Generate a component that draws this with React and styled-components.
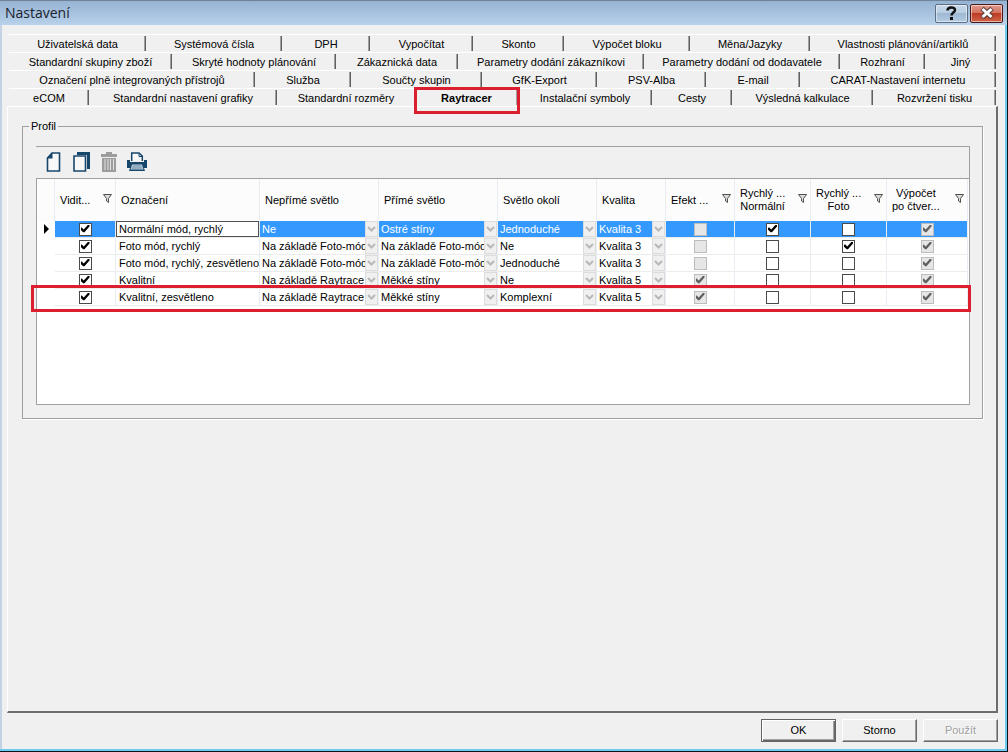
import React from 'react'
import styled, { createGlobalStyle, css } from 'styled-components'

const GlobalStyle = createGlobalStyle`
    * {
        box-sizing: border-box;
    }
    body {
        margin: 0;
        background: #f0f0f0;
        font-family: 'Liberation Sans', Arial, sans-serif;
        font-size: 11px;
        line-height: 14px;
        color: #000000;
    }
    button,
    input,
    select {
        font: inherit;
        color: inherit;
    }
`

const Window = styled.div`
    min-height: 100vh;
    display: flex;
    flex-direction: column;
    background: #f0f0f0;
    border-right: 1px solid #101418;
    border-bottom: 1px solid #101418;
    box-shadow: inset -2px -2px 0 #6ccdf0, inset 2px 0 0 #c3d3e5;
`

const TitleBar = styled.header`
    display: flex;
    align-items: center;
    height: 25px;
    padding: 0 4px 0 5px;
    border-top: 1px solid #6f8298;
    background: linear-gradient(#95b3d3, #b9d1ea);
`

const Title = styled.h1`
    flex: 1;
    margin: 0;
    font-family: 'Open Sans', 'Noto Sans', sans-serif;
    font-size: 14px;
    line-height: 20px;
    font-weight: 400;
    color: #1a222c;
`

const CaptionButton = styled.button`
    display: flex;
    align-items: center;
    justify-content: center;
    width: 33px;
    height: 19px;
    margin-left: 2px;
    padding: 0;
    border: 1px solid ${(p) => (p.$close ? '#4b1a18' : '#5c6f85')};
    border-radius: 2px;
    box-shadow: inset 0 0 0 1px rgba(255, 255, 255, 0.5);
    background: ${(p) =>
        p.$close
            ? 'linear-gradient(#e09a8c 0%, #d4705c 48%, #bd3a22 50%, #d0654a 100%)'
            : 'linear-gradient(#c8d9ea 0%, #b8cde2 48%, #9fb9d3 50%, #b4cbe2 100%)'};
`

const TabStrip = styled.nav`
    padding: 9px 11px 0 9px;
`

const TabRow = styled.div`
    display: flex;
    height: 18px;
`

const Tab = styled.button`
    position: relative;
    flex: ${(p) => p.$size} 0 0;
    min-width: 0;
    padding: 0;
    border: 0;
    border-top: 1px solid #ffffff;
    background: none;
    line-height: 16px;
    white-space: nowrap;
    font-weight: ${(p) => (p.$active ? 700 : 400)};

    &::after {
        content: '';
        display: ${(p) => (p.$noEdge ? 'none' : 'block')};
        position: absolute;
        right: 0;
        top: 1px;
        bottom: 1px;
        width: 2px;
        background: linear-gradient(90deg, #a0a0a0 50%, #606060 50%);
    }
`

/* red frame drawn over the highlighted tab or row */
const Marker = styled.span`
    position: absolute;
    z-index: 1;
    inset: ${(p) => p.$inset};
    border: 3px solid #dc1f2e;
    pointer-events: none;
`

const Panel = styled.main`
    flex: 1;
    margin: 0 9px 0 7px;
    padding: 12px 13px 0 14px;
    border: 1px solid #ffffff;
    border-right: 2px solid #6d6d6d;
    border-bottom: 2px solid #6d6d6d;
`

const Group = styled.fieldset`
    min-width: 0;
    margin: 0;
    padding: 13px 12px 13px 13px;
    border: 1px solid #a0a0a0;
    box-shadow: 1px 1px 0 #ffffff;
`

const Legend = styled.legend`
    margin-left: -7px;
    padding: 0 2px;
`

const Toolbar = styled.div`
    display: flex;
    align-items: center;
    gap: 6px;
    height: 32px;
    padding: 0 6px 2px;
    border-top: 1px solid #a0a0a0;
    border-right: 1px solid #a0a0a0;
`

const ToolButton = styled.button`
    display: flex;
    align-items: center;
    justify-content: center;
    width: 22px;
    height: 24px;
    padding: 0;
    border: 0;
    background: none;
`

const GridBox = styled.div`
    height: 227px;
    padding-right: 1px;
    border: 1px solid #a0a0a0;
    background: #ffffff;
`

const Grid = styled.table`
    width: 100%;
    table-layout: fixed;
    border-collapse: separate;
    border-spacing: 0;
`

const HeadCell = styled.th`
    height: 42px;
    padding: 0 3px 0 5px;
    border-right: 1px solid #e8edf3;
    background: #fcfcfc;
    font-weight: 400;
    text-align: left;
    line-height: 13px;
`

const HeadInner = styled.div`
    display: flex;
    align-items: center;
    justify-content: space-between;
    white-space: pre;
    text-align: ${(p) => (p.$center ? 'center' : 'left')};

    svg {
        margin-bottom: 4px;
    }
`

const Row = styled.tr`
    position: relative;
    ${(p) =>
        p.$selected &&
        css`
            td:not(:first-child) {
                background: #3399ff;
                color: #ffffff;
            }
        `}
`

const Cell = styled.td`
    height: 17px;
    padding: 0 0 0 3px;
    border-right: 1px solid #e8edf3;
    border-bottom: 1px solid #ececec;
    line-height: 16px;
    white-space: nowrap;

    &:first-child {
        padding: 0;
        border-color: transparent;
    }
`

const CheckCell = styled(Cell)`
    padding: 0;
`

const ComboCell = styled(Cell)`
    padding: 0 0 0 2px;
`

const NameInput = styled.input`
    display: block;
    width: 100%;
    height: 16px;
    padding: 0 2px;
    border: 1px solid #505050;
    outline: 0;
    background: #ffffff;
    color: #000000;
`

const NameCell = styled(Cell)`
    padding: ${(p) => (p.$editing ? 0 : '0 0 0 3px')};
`

const Pointer = styled.svg`
    display: block;
    margin-left: 7px;
`

const Combo = styled.div`
    display: flex;
    height: 16px;
`

const Select = styled.select`
    appearance: none;
    flex: 1;
    min-width: 0;
    height: 16px;
    padding: 0;
    border: 0;
    background: none;
    line-height: 16px;
    text-overflow: clip;
    opacity: 1;
`

const Arrow = styled.span`
    display: flex;
    align-items: center;
    justify-content: center;
    width: 13px;
    height: 16px;
    border: 1px solid #dcdcdc;
    background: #f0f0f0;
`

const Check = styled.input`
    appearance: none;
    display: block;
    width: 13px;
    height: 13px;
    margin: 0 auto;
    border: 1px solid #4a4a4a;
    background: #ffffff;
    color: #000000;

    &:disabled {
        border-color: #bcbcbc;
        background: #e6e6e6;
        color: #606060;
    }

    &:checked::after {
        content: '';
        display: block;
        width: 9px;
        height: 8px;
        margin: 1px;
        background: currentColor;
        clip-path: polygon(0 42%, 14% 38%, 36% 64%, 84% 2%, 100% 2%, 100% 24%, 44% 98%, 30% 98%, 0 66%);
    }
`

const Footer = styled.footer`
    display: flex;
    justify-content: flex-end;
    gap: 6px;
    padding: 6px 9px 9px;
`

const DialogButton = styled.button`
    width: 75px;
    height: 23px;
    padding: 0 0 2px;
    border: 1px solid;
    border-color: #ffffff #696969 #696969 #ffffff;
    background: #f0f0f0;
    box-shadow: inset -1px -1px 0 #a0a0a0;

    &:disabled {
        color: #a0a0a0;
        text-shadow: 1px 1px 0 #ffffff;
    }

    ${(p) =>
        p.$default &&
        css`
            border-color: #646464;
            box-shadow: inset 1px 1px 0 #ffffff, inset -1px -1px 0 #696969,
                inset -2px -2px 0 #a0a0a0;
        `}
`

const tabRows = [
    [
        ['Uživatelská data', 137],
        ['Systémová čísla', 136],
        ['DPH', 88],
        ['Vypočítat', 103],
        ['Skonto', 91],
        ['Výpočet bloku', 126],
        ['Měna/Jazyky', 120],
        ['Vlastnosti plánování/artiklů', 186],
    ],
    [
        ['Standardní skupiny zboží', 163],
        ['Skryté hodnoty plánování', 164],
        ['Zákaznická data', 122],
        ['Parametry dodání zákazníkovi', 186],
        ['Parametry dodání od dodavatele', 196],
        ['Rozhraní', 85],
        ['Jiný', 71],
    ],
    [
        ['Označení plně integrovaných přístrojů', 246],
        ['Služba', 96],
        ['Součty skupin', 131],
        ['GfK-Export', 115],
        ['PSV-Alba', 109],
        ['E-mail', 94],
        ['CARAT-Nastavení internetu', 196],
    ],
    [
        ['eCOM', 80],
        ['Standardní nastavení grafiky', 188],
        ['Standardní rozměry', 138],
        ['Raytracer', 103],
        ['Instalační symboly', 134],
        ['Cesty', 80],
        ['Výsledná kalkulace', 141],
        ['Rozvržení tisku', 123],
    ],
]

const columns = [
    { title: '', width: 18 },
    { title: 'Vidit...', width: 61, filter: true },
    { title: 'Označení', width: 144 },
    { title: 'Nepřímé světlo', width: 119 },
    { title: 'Přímé světlo', width: 119 },
    { title: 'Světlo okolí', width: 99 },
    { title: 'Kvalita', width: 69 },
    { title: 'Efekt ...', width: 69, filter: true },
    { title: 'Rychlý ...\nNormální', width: 76, filter: true, center: true },
    { title: 'Rychlý ...\nFoto', width: 76, filter: true, center: true },
    { title: 'Výpočet\npo čtver...', width: 81, filter: true, center: true },
]

const profiles = [
    {
        name: 'Normální mód, rychlý',
        combos: ['Ne', 'Ostré stíny', 'Jednoduché', 'Kvalita 3'],
        effect: false,
        normal: true,
        photo: false,
    },
    {
        name: 'Foto mód, rychlý',
        combos: ['Na základě Foto-mód', 'Na základě Foto-mód', 'Ne', 'Kvalita 3'],
        effect: false,
        normal: false,
        photo: true,
    },
    {
        name: 'Foto mód, rychlý, zesvětleno',
        combos: ['Na základě Foto-mód', 'Na základě Foto-mód', 'Jednoduché', 'Kvalita 3'],
        effect: false,
        normal: false,
        photo: false,
    },
    {
        name: 'Kvalitní',
        combos: ['Na základě Raytrace', 'Měkké stíny', 'Ne', 'Kvalita 5'],
        effect: true,
        normal: false,
        photo: false,
    },
    {
        name: 'Kvalitní, zesvětleno',
        combos: ['Na základě Raytrace', 'Měkké stíny', 'Komplexní', 'Kvalita 5'],
        effect: true,
        normal: false,
        photo: false,
        marked: true,
    },
]

const FilterIcon = () => (
    <svg width="9" height="9" viewBox="0 0 9 9">
        <path d="M0.5 0.5H8.5L5.5 4.5V8.5L3.5 7V4.5Z" fill="#dcdcdc" stroke="#505050" />
    </svg>
)

const NewIcon = () => (
    <svg width="15" height="20" viewBox="0 0 15 20">
        <path d="M6 1H13.5V19H1.5V6Z" fill="#f8f8f8" stroke="#17466b" strokeWidth="1.6" />
        <path d="M0.7 6.500L6.500 0.200V6.500Z" fill="#17466b" />
    </svg>
)

const CopyIcon = () => (
    <svg width="17" height="20" viewBox="0 0 17 20">
        <path d="M4 0H17V17H14V3H4Z" fill="#17466b" />
        <path d="M1 4H12.5V19H1Z" fill="#f8f8f8" stroke="#17466b" strokeWidth="1.6" />
    </svg>
)

const TrashIcon = () => (
    <svg width="18" height="20" viewBox="0 0 18 20">
        <path d="M6 0H12V2H17V5H1V2H6Z" fill="#9c9c9c" />
        <path d="M2 6H16V20H2Z" fill="#9c9c9c" />
        <path d="M5 7V18M8 7V18M10.500 7V18M13.500 7V18" stroke="#e2e2e2" />
    </svg>
)

const PrintIcon = () => (
    <svg width="20" height="20" viewBox="0 0 20 20">
        <path d="M4.700 9V1H12L15.300 4V9" fill="#f8f8f8" stroke="#17466b" strokeWidth="1.5" />
        <path d="M12 1V4.500H15.300" fill="none" stroke="#17466b" />
        <path d="M0 8H3V10H17V8H20V16H17L18 19H2L3 16H0Z" fill="#17466b" />
        <path d="M5 12.500H15L16.500 17.500H3.500Z" fill="#c8d4de" />
        <path d="M5.500 14H14.500M4.500 16H15.500" stroke="#5f86a3" />
    </svg>
)

const HelpIcon = () => (
    <svg width="11" height="14" viewBox="0 0 11 14">
        <path
            d="M1.500 4.500C1.500 0.500 9 0.500 9 4C9 6.500 5.500 6.500 5.500 9.500"
            fill="none"
            stroke="#101010"
            strokeWidth="2.500"
        />
        <rect x="4" y="11" width="3" height="3" fill="#101010" />
    </svg>
)

const CloseIcon = () => (
    <svg width="16" height="14" viewBox="0 0 16 14">
        <path d="M3 2.500L13 11.500M13 2.500L3 11.500" stroke="#5a4040" strokeWidth="5" />
        <path d="M3.500 3L12.500 11M12.500 3L3.500 11" stroke="#ffffff" strokeWidth="3" />
    </svg>
)

const ComboBox = ({ value, label }) => (
    <Combo>
        <Select aria-label={label} defaultValue={value} disabled>
            <option>{value}</option>
        </Select>
        <Arrow>
            <svg width="9" height="6" viewBox="0 0 9 6">
                <path d="M1 1L4.500 4.500L8 1" fill="none" stroke="#b8b8b8" strokeWidth="2" />
            </svg>
        </Arrow>
    </Combo>
)

const ProfileRow = ({ profile, selected }) => (
    <Row $selected={selected}>
        <Cell>
            {selected && (
                <Pointer width="6" height="10" viewBox="0 0 6 10">
                    <path d="M0 0L5 5L0 10Z" />
                </Pointer>
            )}
            {profile.marked && <Marker $inset="-4px -3px -6px -6px" />}
        </Cell>
        <CheckCell>
            <Check type="checkbox" aria-label="Viditelné" defaultChecked />
        </CheckCell>
        <NameCell $editing={selected}>
            {selected ? (
                <NameInput aria-label="Označení" defaultValue={profile.name} />
            ) : (
                profile.name
            )}
        </NameCell>
        {profile.combos.map((value, i) => (
            <ComboCell key={i}>
                <ComboBox value={value} label={columns[i + 3].title} />
            </ComboCell>
        ))}
        <CheckCell>
            <Check type="checkbox" aria-label="Efekt" defaultChecked={profile.effect} disabled />
        </CheckCell>
        <CheckCell>
            <Check type="checkbox" aria-label="Normální" defaultChecked={profile.normal} />
        </CheckCell>
        <CheckCell>
            <Check type="checkbox" aria-label="Foto" defaultChecked={profile.photo} />
        </CheckCell>
        <CheckCell>
            <Check type="checkbox" aria-label="Výpočet" defaultChecked disabled />
        </CheckCell>
    </Row>
)

const App = () => {
    return (
        <>
            <GlobalStyle />
            <Window>
                <TitleBar>
                    <Title>Nastavení</Title>
                    <CaptionButton aria-label="Nápověda">
                        <HelpIcon />
                    </CaptionButton>
                    <CaptionButton $close aria-label="Zavřít">
                        <CloseIcon />
                    </CaptionButton>
                </TitleBar>
                <TabStrip>
                    {tabRows.map((row, i) => (
                        <TabRow key={i}>
                            {row.map(([label, size]) => (
                                <Tab
                                    key={label}
                                    $size={size}
                                    $active={label === 'Raytracer'}
                                    $noEdge={label === 'Standardní rozměry'}
                                >
                                    {label}
                                    {label === 'Raytracer' && (
                                        <Marker $inset="-2px -2px -8px -1px" />
                                    )}
                                </Tab>
                            ))}
                        </TabRow>
                    ))}
                </TabStrip>
                <Panel>
                    <Group>
                        <Legend>Profil</Legend>
                        <Toolbar>
                            <ToolButton aria-label="Nový">
                                <NewIcon />
                            </ToolButton>
                            <ToolButton aria-label="Kopírovat">
                                <CopyIcon />
                            </ToolButton>
                            <ToolButton aria-label="Smazat" disabled>
                                <TrashIcon />
                            </ToolButton>
                            <ToolButton aria-label="Tisk">
                                <PrintIcon />
                            </ToolButton>
                        </Toolbar>
                        <GridBox>
                            <Grid>
                                <colgroup>
                                    {columns.map((col, i) => (
                                        <col key={i} width={col.width} />
                                    ))}
                                </colgroup>
                                <thead>
                                    <tr>
                                        {columns.map((col, i) => (
                                            <HeadCell key={i}>
                                                <HeadInner $center={col.center}>
                                                    <span>{col.title}</span>
                                                    {col.filter && <FilterIcon />}
                                                </HeadInner>
                                            </HeadCell>
                                        ))}
                                    </tr>
                                </thead>
                                <tbody>
                                    {profiles.map((profile, i) => (
                                        <ProfileRow
                                            key={profile.name}
                                            profile={profile}
                                            selected={i === 0}
                                        />
                                    ))}
                                </tbody>
                            </Grid>
                        </GridBox>
                    </Group>
                </Panel>
                <Footer>
                    <DialogButton $default>OK</DialogButton>
                    <DialogButton>Storno</DialogButton>
                    <DialogButton disabled>Použít</DialogButton>
                </Footer>
            </Window>
        </>
    )
}

export default App
